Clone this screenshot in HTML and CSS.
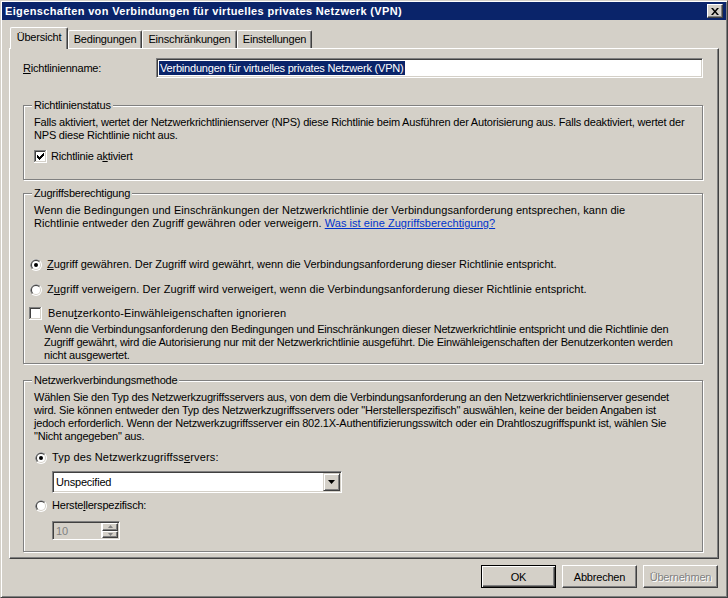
FILE: index.html
```html
<!DOCTYPE html>
<html lang="de">
<head>
    <meta charset="UTF-8">
    <title>Eigenschaften von Verbindungen für virtuelles privates Netzwerk (VPN)</title>
    <link rel="stylesheet" href="styles.css">
</head>
<body>
    <div class="window">
        <div class="titlebar">
            <span class="title">Eigenschaften von Verbindungen für virtuelles privates Netzwerk (VPN)</span>
            <span class="close-button">
                <svg width="8" height="7" viewBox="0 0 8 7"><path d="M0 0h2l2 2.5 2-2.5h2l-3 3.5 3 3.5h-2l-2-2.5-2 2.5h-2l3-3.5z" fill="#000"/></svg>
            </span>
        </div>

        <div class="content">
            <div class="tabs">
                <div class="tab selected tab-overview">Übersicht</div>
                <div class="tab tab-conditions">Bedingungen</div>
                <div class="tab tab-constraints">Einschränkungen</div>
                <div class="tab tab-settings">Einstellungen</div>
            </div>

            <div class="panel">
                <div class="name-row">
                    <label class="name-label"><u>R</u>ichtlinienname:</label>
                    <div class="textbox"><span class="selected-text">Verbindungen für virtuelles privates Netzwerk (VPN)</span></div>
                </div>

                <fieldset class="group status-group">
                    <legend>Richtlinienstatus</legend>
                    <p class="text">Falls aktiviert, wertet der Netzwerkrichtlinienserver (NPS) diese Richtlinie beim Ausführen der Autorisierung aus. Falls deaktiviert, wertet der<br>NPS diese Richtlinie nicht aus.</p>
                    <div class="option enabled-option">
                        <svg class="checkbox" width="13" height="13" viewBox="0 0 13 13">
                            <rect width="13" height="13" fill="#fff"/>
                            <rect width="12" height="12" fill="#808080"/>
                            <rect x="1" y="1" width="11" height="11" fill="#d4d0c8"/>
                            <rect x="1" y="1" width="10" height="10" fill="#404040"/>
                            <rect x="2" y="2" width="9" height="9" fill="#fff"/>
                            <path d="M3 5h1v3h-1zM4 6h1v3h-1zM5 7h1v3h-1zM6 6h1v3h-1zM7 5h1v3h-1zM8 4h1v3h-1zM9 3h1v3h-1z" fill="#000"/>
                        </svg>
                        <span>Richtlinie a<u>k</u>tiviert</span>
                    </div>
                </fieldset>

                <fieldset class="group access-group">
                    <legend>Zugriffsberechtigung</legend>
                    <p class="text access-intro">Wenn die Bedingungen und Einschränkungen der Netzwerkrichtlinie der Verbindungsanforderung entsprechen, kann die<br>Richtlinie entweder den Zugriff gewähren oder verweigern. <a class="link" href="#">Was ist eine Zugriffsberechtigung?</a></p>
                    <div class="option grant-option">
                        <svg class="radio" width="12" height="12" viewBox="0 0 12 12">
                            <circle cx="6" cy="6" r="6" fill="#fff"/>
                            <path d="M1.76 10.24A6 6 0 0 1 10.24 1.76Z" fill="#808080"/>
                            <circle cx="6" cy="6" r="5" fill="#d4d0c8"/>
                            <path d="M2.46 9.54A5 5 0 0 1 9.54 2.46Z" fill="#404040"/>
                            <circle cx="6" cy="6" r="4" fill="#fff"/>
                            <circle cx="6" cy="6" r="2" fill="#000"/>
                        </svg>
                        <span><u>Z</u>ugriff gewähren. Der Zugriff wird gewährt, wenn die Verbindungsanforderung dieser Richtlinie entspricht.</span>
                    </div>
                    <div class="option deny-option">
                        <svg class="radio" width="12" height="12" viewBox="0 0 12 12">
                            <circle cx="6" cy="6" r="6" fill="#fff"/>
                            <path d="M1.76 10.24A6 6 0 0 1 10.24 1.76Z" fill="#808080"/>
                            <circle cx="6" cy="6" r="5" fill="#d4d0c8"/>
                            <path d="M2.46 9.54A5 5 0 0 1 9.54 2.46Z" fill="#404040"/>
                            <circle cx="6" cy="6" r="4" fill="#fff"/>
                        </svg>
                        <span>Z<u>u</u>griff verweigern. Der Zugriff wird verweigert, wenn die Verbindungsanforderung dieser Richtlinie entspricht.</span>
                    </div>
                    <div class="option ignore-option">
                        <svg class="checkbox" width="13" height="13" viewBox="0 0 13 13">
                            <rect width="13" height="13" fill="#fff"/>
                            <rect width="12" height="12" fill="#808080"/>
                            <rect x="1" y="1" width="11" height="11" fill="#d4d0c8"/>
                            <rect x="1" y="1" width="10" height="10" fill="#404040"/>
                            <rect x="2" y="2" width="9" height="9" fill="#fff"/>
                        </svg>
                        <span>Benu<u>t</u>zerkonto-Einwähleigenschaften ignorieren</span>
                    </div>
                    <p class="text option-note">Wenn die Verbindungsanforderung den Bedingungen und Einschränkungen dieser Netzwerkrichtlinie entspricht und die Richtlinie den<br>Zugriff gewährt, wird die Autorisierung nur mit der Netzwerkrichtlinie ausgeführt. Die Einwähleigenschaften der Benutzerkonten werden<br>nicht ausgewertet.</p>
                </fieldset>

                <fieldset class="group method-group">
                    <legend>Netzwerkverbindungsmethode</legend>
                    <p class="text">Wählen Sie den Typ des Netzwerkzugriffsservers aus, von dem die Verbindungsanforderung an den Netzwerkrichtlinienserver gesendet<br>wird. Sie können entweder den Typ des Netzwerkzugriffsservers oder "Herstellerspezifisch" auswählen, keine der beiden Angaben ist<br>jedoch erforderlich. Wenn der Netzwerkzugriffsserver ein 802.1X-Authentifizierungsswitch oder ein Drahtloszugriffspunkt ist, wählen Sie<br>"Nicht angegeben" aus.</p>
                    <div class="option type-option">
                        <svg class="radio" width="12" height="12" viewBox="0 0 12 12">
                            <circle cx="6" cy="6" r="6" fill="#fff"/>
                            <path d="M1.76 10.24A6 6 0 0 1 10.24 1.76Z" fill="#808080"/>
                            <circle cx="6" cy="6" r="5" fill="#d4d0c8"/>
                            <path d="M2.46 9.54A5 5 0 0 1 9.54 2.46Z" fill="#404040"/>
                            <circle cx="6" cy="6" r="4" fill="#fff"/>
                            <circle cx="6" cy="6" r="2" fill="#000"/>
                        </svg>
                        <span>Typ des Netzwerkzugriffss<u>e</u>rvers:</span>
                    </div>
                    <div class="combo">
                        <span class="combo-value">Unspecified</span>
                        <span class="combo-button">
                            <svg width="7" height="4" viewBox="0 0 7 4"><path d="M0 0h7l-3.5 4z" fill="#000"/></svg>
                        </span>
                    </div>
                    <div class="option vendor-option">
                        <svg class="radio" width="12" height="12" viewBox="0 0 12 12">
                            <circle cx="6" cy="6" r="6" fill="#fff"/>
                            <path d="M1.76 10.24A6 6 0 0 1 10.24 1.76Z" fill="#808080"/>
                            <circle cx="6" cy="6" r="5" fill="#d4d0c8"/>
                            <path d="M2.46 9.54A5 5 0 0 1 9.54 2.46Z" fill="#404040"/>
                            <circle cx="6" cy="6" r="4" fill="#fff"/>
                        </svg>
                        <span>Herste<u>l</u>lerspezifisch:</span>
                    </div>
                    <div class="spin">
                        <span class="spin-value">10</span>
                        <span class="spin-buttons">
                            <span class="spin-button"><svg width="5" height="3" viewBox="0 0 5 3"><path d="M2.5 0l2.5 3h-5z" fill="#808080"/></svg></span>
                            <span class="spin-button"><svg width="5" height="3" viewBox="0 0 5 3"><path d="M0 0h5l-2.5 3z" fill="#808080"/></svg></span>
                        </span>
                    </div>
                </fieldset>
            </div>

            <div class="buttons">
                <button class="button default-button">OK</button>
                <button class="button">Abbrechen</button>
                <button class="button" disabled>Übernehmen</button>
            </div>
        </div>
    </div>
</body>
</html>
```

FILE: styles.css
```css
body {
    margin: 0;
    background-color: #d4d0c8;
    font-family: "Liberation Sans", Arial, sans-serif;
    font-size: 11px;
    line-height: 13px;
    letter-spacing: -0.2px; /* narrow like MS Sans Serif */
    color: #000;
}

u {
    text-decoration: underline;
}

.window {
    width: 728px;
    height: 598px;
    box-sizing: border-box;
    border: 1px solid;
    border-color: #d4d0c8 #404040 #404040 #d4d0c8;
    box-shadow: inset 1px 1px 0 #fff, inset -1px -1px 0 #808080;
    padding: 1px;
}

.titlebar {
    height: 18px;
    background-color: #0a246a; /* classic navy caption */
    color: #fff;
    font-weight: bold;
    letter-spacing: 0.35px;
    display: flex;
    align-items: center;
    justify-content: space-between;
    padding: 0 3px 0 3px;
}

.close-button {
    width: 16px;
    height: 14px;
    box-sizing: border-box;
    background-color: #d4d0c8;
    border: 1px solid;
    border-color: #fff #404040 #404040 #fff;
    box-shadow: inset -1px -1px 0 #808080;
    display: flex;
    align-items: center;
    justify-content: center;
    padding-right: 1px;
}

.content {
    padding: 7px 7px 0 7px;
}

/* tab strip */
.tabs {
    display: flex;
    align-items: flex-end;
    height: 22px;
    padding-left: 1px;
    margin-bottom: -1px;
    position: relative;
    z-index: 1;
}

.tab {
    height: 18px;
    box-sizing: border-box;
    margin-bottom: 1px;
    border: 1px solid;
    border-bottom: none;
    border-color: #fff #404040 #fff #fff;
    border-radius: 2px 2px 0 0;
    box-shadow: inset -1px 0 0 #808080;
    display: flex;
    align-items: center;
    justify-content: center;
    background-color: #d4d0c8;
}

.tab.selected {
    height: 22px;
    margin-bottom: 0;
    padding-bottom: 2px;
}

.tab-overview { width: 58px; }
.tab-conditions { width: 74px; }
.tab-constraints { width: 95px; }
.tab-settings { width: 75px; }

.panel {
    height: 511px;
    box-sizing: border-box;
    border: 1px solid;
    border-color: #fff #404040 #404040 #fff;
    box-shadow: inset -1px -1px 0 #808080;
    padding: 9px 15px 0 13px;
}

.name-row {
    display: flex;
    align-items: center;
    height: 20px;
}

.name-label {
    flex: 0 0 133px;
}

.textbox {
    flex: 1;
    height: 20px;
    box-sizing: border-box;
    background-color: #fff;
    border: 1px solid;
    border-color: #808080 #fff #fff #808080;
    box-shadow: inset 1px 1px 0 #404040, inset -1px -1px 0 #d4d0c8;
    display: flex;
    align-items: center;
    padding-left: 2px;
}

.selected-text {
    background-color: #0a246a;
    color: #fff;
    line-height: 14px;
    padding: 0 1px;
}

/* group boxes */
.group {
    margin: 0;
    min-width: 0;
    padding: 4px 10px 0 10px;
    border: 1px solid #808080;
    box-shadow: inset 1px 1px 0 #fff, 1px 1px 0 #fff;
}

.group legend {
    padding: 0 2px;
    margin-left: -2px;
    background-color: #d4d0c8;
    line-height: 13px;
}

.status-group {
    margin-top: 21px;
    padding-bottom: 16px;
}

.access-group {
    margin-top: 7px;
    padding-bottom: 1px;
}

.method-group {
    margin-top: 10px;
    padding-bottom: 11px;
}

.text {
    margin: 0;
    white-space: nowrap;
}

.access-intro {
    letter-spacing: 0.05px;
}

.link {
    color: #0033cc;
    text-decoration: underline;
}

.option {
    display: flex;
    align-items: center;
    height: 13px;
    white-space: nowrap;
}

.checkbox {
    margin-right: 4px;
    flex: none;
}

.radio {
    margin-right: 5px;
    flex: none;
}

.enabled-option {
    margin-top: 8px;
}

.grant-option {
    margin-top: 28px;
    margin-left: -4px;
    letter-spacing: -0.04px;
}

.deny-option {
    margin-top: 12px;
    margin-left: -4px;
    letter-spacing: 0.08px;
}

.ignore-option {
    margin-top: 11px;
    margin-left: -5px;
    letter-spacing: 0.1px;
}

.ignore-option .checkbox {
    margin-right: 6px;
}

.option-note {
    margin-top: 3px;
    margin-left: 10px;
}

.type-option {
    margin-top: 8px;
    margin-left: 1px;
    letter-spacing: 0.15px;
}

.vendor-option {
    margin-top: 6px;
    margin-left: 1px;
}

.combo {
    margin-top: 7px;
    margin-left: 18px;
    width: 290px;
    height: 22px;
    box-sizing: border-box;
    background-color: #fff;
    border: 1px solid;
    border-color: #808080 #fff #fff #808080;
    box-shadow: inset 1px 1px 0 #404040, inset -1px -1px 0 #d4d0c8;
    display: flex;
    align-items: center;
    justify-content: space-between;
    padding: 1px 1px 1px 3px;
}

.combo-button {
    width: 17px;
    height: 18px;
    box-sizing: border-box;
    background-color: #d4d0c8;
    border: 1px solid;
    border-color: #d4d0c8 #404040 #404040 #d4d0c8;
    box-shadow: inset 1px 1px 0 #fff, inset -1px -1px 0 #808080;
    display: flex;
    align-items: center;
    justify-content: center;
}

.spin {
    margin-top: 9px;
    margin-left: 18px;
    width: 68px;
    height: 19px;
    box-sizing: border-box;
    background-color: #d4d0c8;
    border: 1px solid;
    border-color: #808080 #fff #fff #808080;
    box-shadow: inset 1px 1px 0 #404040;
    display: flex;
    padding: 1px 1px 1px 0;
}

.spin-value {
    flex: 1;
    color: #808080;
    padding-left: 3px;
    line-height: 16px;
    border-right: 1px solid #fff;
}

.spin-buttons {
    width: 16px;
    display: flex;
    flex-direction: column;
}

.spin-button {
    flex: 1;
    box-sizing: border-box;
    border: 1px solid;
    border-color: #fff #404040 #404040 #fff;
    box-shadow: inset -1px -1px 0 #808080;
    display: flex;
    align-items: center;
    justify-content: center;
}

/* dialog buttons */
.buttons {
    display: flex;
    justify-content: flex-end;
    gap: 6px;
    margin-top: 6px;
    padding-right: 1px;
}

.button {
    width: 75px;
    height: 23px;
    box-sizing: border-box;
    background-color: #d4d0c8;
    border: 1px solid;
    border-color: #fff #404040 #404040 #fff;
    box-shadow: inset -1px -1px 0 #808080;
    font-family: inherit;
    font-size: 11px;
    letter-spacing: -0.2px;
    color: #000;
    padding: 0;
}

.default-button {
    border-color: #000;
    box-shadow: inset 1px 1px 0 #fff, inset -1px -1px 0 #404040, inset -2px -2px 0 #808080;
}

.button:disabled {
    color: #808080;
    text-shadow: 1px 1px 0 #fff;
}
```
